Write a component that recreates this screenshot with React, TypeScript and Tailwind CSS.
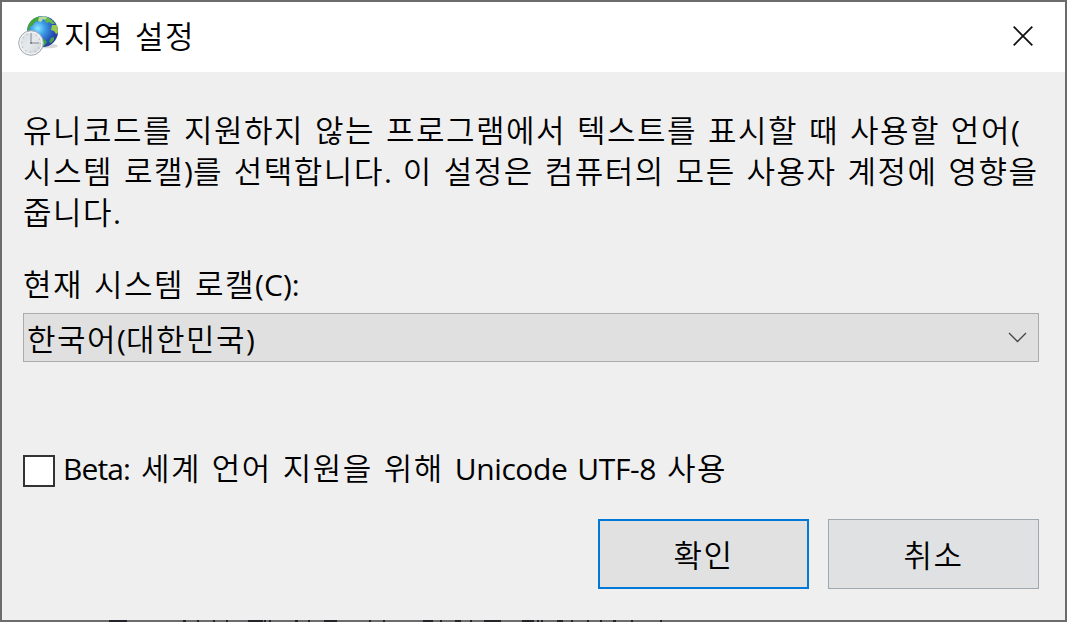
import type { ReactNode } from "react";

const marks: [number, number][] = [
  [109, 18], [183, 3], [197, 2], [213, 2], [226, 2], [248, 15], [264, 2], [269, 2],
  [295, 3], [308, 2], [324, 13], [369, 2], [383, 2], [423, 10], [440, 2], [455, 6],
  [470, 2], [484, 17], [522, 12], [537, 2], [541, 2], [557, 6], [571, 2], [587, 2],
  [600, 2], [613, 3], [631, 2], [660, 2],
];

function GlobeClockIcon() {
  return (
    <svg width="42" height="42" viewBox="0 0 42 42" className="-mt-[2px] block shrink-0">
      <defs>
        <radialGradient id="sea" cx="0.35" cy="0.4" r="0.68">
          <stop offset="0" stopColor="#8be6ff" />
          <stop offset="0.35" stopColor="#3c9be6" />
          <stop offset="0.75" stopColor="#2552b8" />
          <stop offset="1" stopColor="#243a94" />
        </radialGradient>
        <linearGradient id="face" x1="0" y1="0" x2="1" y2="1">
          <stop offset="0" stopColor="#d3d9df" />
          <stop offset="0.5" stopColor="#e6eaed" />
          <stop offset="1" stopColor="#c9ced3" />
        </linearGradient>
        <clipPath id="globe"><circle cx="24.5" cy="16.5" r="15.5" /></clipPath>
      </defs>
      <ellipse cx="29" cy="31" rx="11" ry="2.3" fill="#c9c9c9" opacity="0.7" />
      <circle cx="24.5" cy="16.5" r="15.5" fill="url(#sea)" />
      <g clipPath="url(#globe)">
        <path d="M9 16 10 8 16 2 21 1 23 3 20 6 17 7 15 10 12 12 11 16Z" fill="#47a33c" />
        <path d="M21 2 27 1 30 3 27 5 25 4 23 7 20 6Z" fill="#b6dc9a" />
        <path d="M29 2 34 5 37 9 34 9 31 7 29 8 27 6Z" fill="#65b84a" />
        <path d="M34 10 39 10 41 17 38 19 36 16 33 15Z" fill="#9acb4d" />
        <path d="M33 23 36 22 36 25 33 28 31 27Z" fill="#45a34e" />
        <path d="M23 24 26 24 29 27 26 31 23 32Z" fill="#3ba544" />
      </g>
      <circle cx="13" cy="28" r="12.3" fill="url(#face)" stroke="#a5acb2" strokeWidth="1" />
      <circle cx="13" cy="28" r="11" fill="none" stroke="#f7f8fa" strokeWidth="1" />
      <g stroke="#a3abb2" strokeWidth="0.9" fill="none">
        <circle cx="13" cy="28" r="9.3" strokeWidth="1.2" strokeDasharray="0.8 4.07" />
        <path d="M13 18.5V28H21" stroke="#747e87" />
      </g>
      <circle cx="13" cy="28" r="1" fill="#727c84" />
    </svg>
  );
}

function Latin({ children, className = "" }: { children: ReactNode; className?: string }) {
  return <span className={"font-['Open_Sans'] text-[30px] font-normal leading-none " + className}>{children}</span>;
}

export default function App() {
  return (
    <div className="flex h-[622px] w-[1067px] flex-col overflow-hidden bg-[#6c6c6c] pl-[2px] pr-[2px] pt-[2px] font-['Noto_Sans_CJK_KR',sans-serif] text-[31px] font-[350] tracking-[1.5px] text-black [word-spacing:2.5px]">
      <header className="flex h-[70px] shrink-0 items-center justify-between bg-white pl-[16px] pr-[32px]">
        <div className="flex items-center">
          <GlobeClockIcon />
          <h1 className="-mt-[4px] ml-[4px] whitespace-nowrap leading-[44px]">지역 설정</h1>
        </div>
        <button aria-label="닫기" className="-mt-[2px]">
          <svg width="20" height="20" viewBox="0 0 20 20" className="block">
            <path d="M.7.7 19.3 19.3M19.3.7.7 19.3" stroke="#111" strokeWidth="1.8" />
          </svg>
        </button>
      </header>

      <main className="h-[548px] shrink-0 bg-[#efefef] pl-[21px] pr-[26px] pt-[36px]">
        <p className="h-[123px] whitespace-nowrap leading-[41px]">
          유니코드를 지원하지 않는 프로그램에서 텍스트를 표시할 때 사용할 언어<Latin>(</Latin>
          <br />
          시스템 로캘<Latin className="tracking-[0px]">)</Latin>를 선택합니다<Latin className="tracking-[0px]">.</Latin> 이 설정은 컴퓨터의 모든 사용자 계정에 영향을
          <br />
          줍니다<Latin>.</Latin>
        </p>
        <label className="mt-[31px] block h-[41px] whitespace-nowrap leading-[41px]">
          현재 시스템 로캘<Latin className="tracking-[0.1px]">(C):</Latin>
        </label>
        <div className="mt-[10px] flex h-[49px] items-center justify-between border border-[#ababab] bg-[#e0e0e0] pl-[3px] pr-[11px]">
          <span className="whitespace-nowrap leading-[44px]">
            한국어<Latin className="tracking-[0px]">(</Latin>대한민국<Latin>)</Latin>
          </span>
          <svg width="19" height="11" viewBox="0 0 19 11" className="block">
            <path d="M1 1 9.5 9.5 18 1" fill="none" stroke="#444" strokeWidth="1.3" />
          </svg>
        </div>
        <label className="mt-[85px] flex h-[44px] items-center whitespace-nowrap leading-[44px]">
          <span className="mt-[4px] block size-[32px] border-2 border-[#333] bg-white" />
          <span className="-mt-[4px] ml-[8px]">
            <Latin className="tracking-[-0.9px]">Beta:</Latin> 세계 언어 지원을 위해{" "}
            <Latin className="tracking-[-0.4px]">Unicode UTF-8</Latin> 사용
          </span>
        </label>
        <div className="mt-[28px] flex justify-end gap-[19px]">
          <button className="h-[70px] w-[211px] border-2 border-[#0078d7] bg-[#e1e1e1]">확인</button>
          <button className="h-[70px] w-[211px] border border-[#a0a8ae] bg-[#e0e1e2]">취소</button>
        </div>
      </main>

      <svg width="1063" height="2" viewBox="2 0 1063 2" className="block shrink-0">
        {marks.map(([x, w]) => (
          <rect key={x} x={x} y="0" width={w} height="2" fill="#22242a" />
        ))}
      </svg>
    </div>
  );
}
